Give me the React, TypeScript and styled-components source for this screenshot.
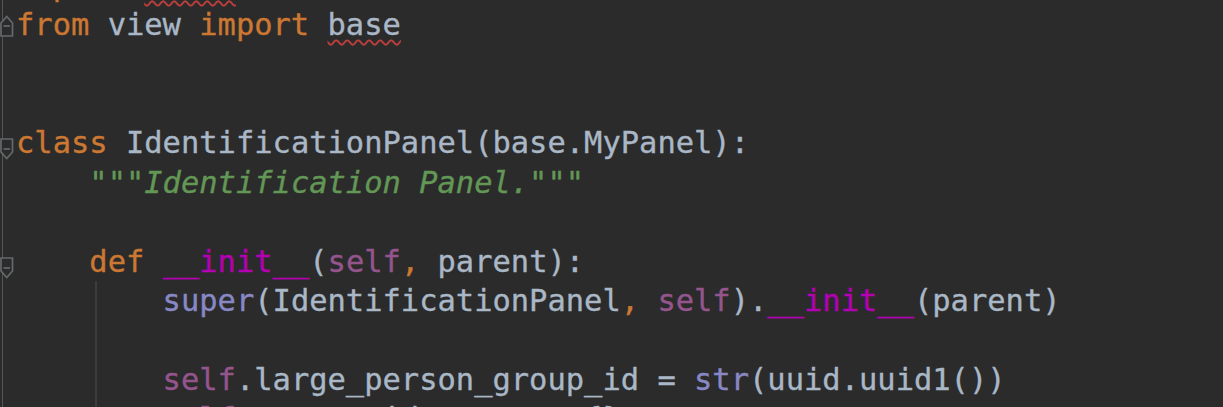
import React from "react";
import styled, { createGlobalStyle, css } from "styled-components";

const GlobalStyle = createGlobalStyle`
  html, body {
    margin: 0;
    padding: 0;
    background: #2b2b2b;
    overflow: hidden;
  }
`;

const ROW = 39.4;

const Editor = styled.div`
  width: 1223px;
  height: 407px;
  overflow: hidden;
  background: #2b2b2b;
  font-family: "DejaVu Sans Mono", "Liberation Mono", monospace;
  font-size: 30.45px;
  -webkit-text-stroke: 0.35px currentColor;
`;

const Lines = styled.div`
  display: flex;
  flex-direction: column;
  margin-top: -34.2px;
`;

const Row = styled.div`
  display: grid;
  grid-template-columns: 16px 1fr;
  height: ${ROW}px;
  line-height: ${ROW}px;
`;

const Gutter = styled.div<{ $marker?: "start" | "end" }>`
  display: flex;
  align-items: flex-start;
  padding-top: ${(p) => (p.$marker === "end" ? 10 : 15)}px;
  box-sizing: border-box;
  background: linear-gradient(to right, transparent 2px, #555555 2px, #555555 3.5px, transparent 3.5px);
`;

const Code = styled.div<{ $guide?: boolean }>`
  white-space: pre;
  color: #a9b7c6;
  ${(p) =>
    p.$guide &&
    css`
      background: linear-gradient(to right, transparent 79px, #3c3c3c 79px, #3c3c3c 81px, transparent 81px);
    `}
`;

type Kind = "kw" | "id" | "doc" | "self" | "magic" | "builtin" | "punct";

const colors: Record<Kind, string> = {
  kw: "#cc7832",
  id: "#a9b7c6",
  doc: "#629755",
  self: "#94558d",
  magic: "#b200b2",
  builtin: "#8888c6",
  punct: "#cc7832",
};

const Tok = styled.span<{ $kind: Kind; $warn?: boolean }>`
  color: ${(p) => colors[p.$kind]};
  font-style: ${(p) => (p.$kind === "doc" ? "italic" : "normal")};
  ${(p) =>
    p.$warn &&
    css`
      text-decoration: underline wavy #bc3f3c;
      text-decoration-thickness: 1.6px;
      text-underline-offset: 4px;
    `}
`;

const FoldMarker: React.FC<{ dir: "start" | "end" }> = ({ dir }) => (
  <svg width="14" height="22" viewBox="0 0 14 22">
    {dir === "start" ? (
      <path d="M1 1 H12.5 V14 L6.75 20.5 L1 14 Z" fill="#2b2b2b" stroke="#66696b" strokeWidth="1.7" />
    ) : (
      <path d="M1 21 H12.5 V8 L6.75 1.5 L1 8 Z" fill="#2b2b2b" stroke="#66696b" strokeWidth="1.7" />
    )}
    <line x1="3.5" x2="10" y1="11" y2="11" stroke="#66696b" strokeWidth="1.7" />
  </svg>
);

type T = [Kind, string, boolean?];

const lines: { toks: T[]; marker?: "start" | "end"; guide?: boolean }[] = [
  { toks: [["kw", "import "], ["id", "model", true]] },
  { toks: [["kw", "from "], ["id", "view "], ["kw", "import "], ["id", "base", true]], marker: "end" },
  { toks: [] },
  { toks: [] },
  { toks: [["kw", "class "], ["id", "IdentificationPanel(base.MyPanel):"]], marker: "start" },
  { toks: [["doc", '    """Identification Panel."""']] },
  { toks: [] },
  {
    toks: [
      ["kw", "    def "],
      ["magic", "__init__"],
      ["id", "("],
      ["self", "self"],
      ["punct", ", "],
      ["id", "parent):"],
    ],
    marker: "start",
  },
  {
    toks: [
      ["builtin", "        super"],
      ["id", "(IdentificationPanel"],
      ["punct", ", "],
      ["self", "self"],
      ["id", ")."],
      ["magic", "__init__"],
      ["id", "(parent)"],
    ],
    guide: true,
  },
  { toks: [], guide: true },
  {
    toks: [
      ["self", "        self"],
      ["id", ".large_person_group_id = "],
      ["builtin", "str"],
      ["id", "(uuid.uuid1())"],
    ],
    guide: true,
  },
  {
    toks: [["self", "        self"], ["id", ".person_id_names = {}"]],
    guide: true,
  },
];

export default function App() {
  return (
    <>
      <GlobalStyle />
      <Editor>
        <Lines>
          {lines.map((l, i) => (
            <Row key={i}>
              <Gutter $marker={l.marker}>{l.marker && <FoldMarker dir={l.marker} />}</Gutter>
              <Code $guide={l.guide}>
                {l.toks.length === 0
                  ? " "
                  : l.toks.map(([k, s, w], j) => {
                      const m = s.match(/^(\s*)(.*)$/s)!;
                      return (
                        <React.Fragment key={j}>
                          {m[1]}
                          <Tok $kind={k} $warn={w}>
                            {m[2]}
                          </Tok>
                        </React.Fragment>
                      );
                    })}
              </Code>
            </Row>
          ))}
        </Lines>
      </Editor>
    </>
  );
}
